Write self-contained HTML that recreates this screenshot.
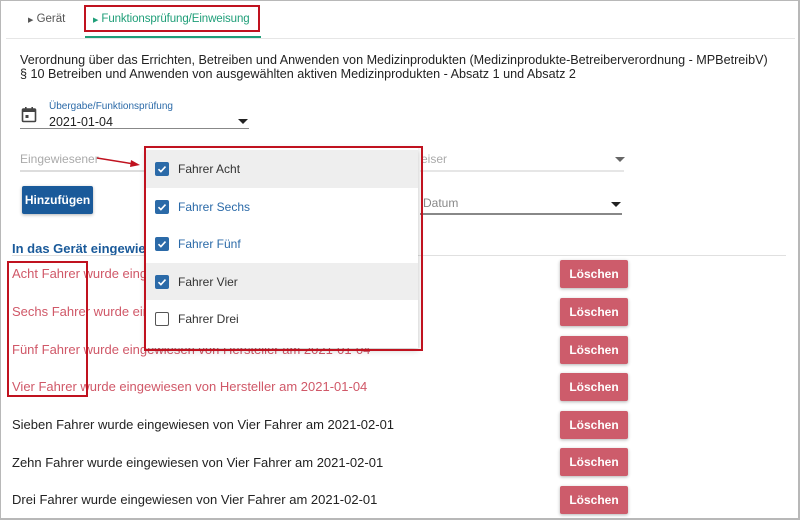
<!DOCTYPE html>
<html><head><meta charset="utf-8">
<style>
*{margin:0;padding:0;box-sizing:border-box}
body{width:800px;height:520px;overflow:hidden;background:#fff;font-family:"Liberation Sans",Arial,sans-serif;position:relative;color:#222}
.a{position:absolute;white-space:nowrap}
.frame{position:absolute;left:0;top:0;width:800px;height:520px;border:2px solid #b8b8b8;border-top-width:1px;border-left-width:1px}
.red{position:absolute;border:2px solid #c0121f}
.line{position:absolute;height:1px;background:#ddd}
.btn{position:absolute;left:560px;width:68px;height:28px;background:#cd5c6b;color:#fff;font-size:12px;font-weight:bold;text-align:center;line-height:28px;border-radius:2px;box-shadow:0 1px 3px rgba(0,0,0,.3)}
.row{position:absolute;left:12px;font-size:13px;white-space:nowrap}
.item{position:absolute;left:146px;width:272px;height:37.5px}
.cb{position:absolute;left:9px;top:12px;width:14px;height:14px;border-radius:2px;background:#2b6aa8}
.cb.off{background:#fff;border:1.5px solid #555}
.lbl{position:absolute;left:32px;top:12px;font-size:12px}
.caret{position:absolute;width:0;height:0;border-left:5px solid transparent;border-right:5px solid transparent;border-top:5px solid #222}
</style></head><body>
<div class="frame"></div>

<div class="a" style="left:28px;top:13px;font-size:11.5px;color:#555"><span style="font-size:7px">&#9654;</span> Gerät</div>
<div class="a" style="left:93px;top:13px;font-size:11.5px;letter-spacing:-0.1px;color:#1e9e78"><span style="font-size:7px">&#9654;</span> Funktionsprüfung/Einweisung</div>
<div class="line" style="left:6px;top:38px;width:789px;background:#e6e6e6"></div>
<div class="a" style="left:85px;top:36px;width:176px;height:2px;background:#1e9e78"></div>
<div class="red" style="left:84px;top:5px;width:176px;height:27px"></div>

<div class="a" style="left:20px;top:53px;font-size:12.6px;line-height:14px;color:#222">Verordnung über das Errichten, Betreiben und Anwenden von Medizinprodukten (Medizinprodukte-Betreiberverordnung - MPBetreibV)<br>§ 10 Betreiben und Anwenden von ausgewählten aktiven Medizinprodukten - Absatz 1 und Absatz 2</div>

<svg class="a" style="left:21px;top:106px" width="16" height="17" viewBox="0 0 16 17"><rect x="1.5" y="3" width="13" height="12.5" rx="1" fill="none" stroke="#444" stroke-width="1.6"/><rect x="1.5" y="3" width="13" height="3" fill="#444"/><rect x="4" y="1" width="1.6" height="3" fill="#444"/><rect x="10.4" y="1" width="1.6" height="3" fill="#444"/><rect x="4.5" y="9" width="3" height="3" fill="#444"/></svg>
<div class="a" style="left:49px;top:101px;font-size:10px;color:#2b6aa8">Übergabe/Funktionsprüfung</div>
<div class="a" style="left:49px;top:115px;font-size:12.5px;color:#222">2021-01-04</div>
<div class="caret" style="left:238px;top:119px"></div>
<div class="line" style="left:20px;top:128px;width:229px;background:#888"></div>

<div class="a" style="left:20px;top:152px;font-size:12px;color:#aaa">Eingewiesener</div>
<div class="line" style="left:20px;top:170px;width:125px;background:#ddd;height:2px"></div>
<svg class="a" style="left:96px;top:154px" width="50" height="16"><line x1="1" y1="4" x2="38" y2="10" stroke="#c0121f" stroke-width="1.5"/><polygon points="44,11 35,6 34,13" fill="#c0121f"/></svg>

<div class="a" style="left:22px;top:186px;width:71px;height:28px;background:#1a5a9a;color:#fff;font-size:12px;font-weight:bold;line-height:28px;text-align:center;border-radius:2px;box-shadow:0 1px 3px rgba(0,0,0,.3)">Hinzufügen</div>

<div class="a" style="left:421px;top:152px;font-size:12px;color:#aaa">eiser</div>
<div class="caret" style="left:615px;top:157px;border-top-color:#666"></div>
<div class="line" style="left:420px;top:170px;width:204px;height:2px;background:#e6e6e6"></div>
<div class="a" style="left:423px;top:196px;font-size:12px;color:#888">Datum</div>
<div class="caret" style="left:611px;top:202px"></div>
<div class="line" style="left:420px;top:213px;width:202px;background:#888;height:1.5px"></div>

<div class="a" style="left:12px;top:241px;font-size:13px;font-weight:bold;color:#1a5a9a">In das Gerät eingewies</div>
<div class="line" style="left:12px;top:255px;width:774px;background:#e0e0e0"></div>

<div class="row" style="top:266px;color:#d05868">Acht Fahrer wurde eingewiesen von Hersteller am 2021-01-04</div>
<div class="row" style="top:304px;color:#d05868">Sechs Fahrer wurde eingewiesen von Hersteller am 2021-01-04</div>
<div class="row" style="top:342px;color:#d05868">Fünf Fahrer wurde eingewiesen von Hersteller am 2021-01-04</div>
<div class="row" style="top:379px;color:#d05868">Vier Fahrer wurde eingewiesen von Hersteller am 2021-01-04</div>
<div class="row" style="top:417px">Sieben Fahrer wurde eingewiesen von Vier Fahrer am 2021-02-01</div>
<div class="row" style="top:455px">Zehn Fahrer wurde eingewiesen von Vier Fahrer am 2021-02-01</div>
<div class="row" style="top:492px">Drei Fahrer wurde eingewiesen von Vier Fahrer am 2021-02-01</div>
<div class="btn" style="top:260px">Löschen</div>
<div class="btn" style="top:298px">Löschen</div>
<div class="btn" style="top:336px">Löschen</div>
<div class="btn" style="top:373px">Löschen</div>
<div class="btn" style="top:411px">Löschen</div>
<div class="btn" style="top:448px">Löschen</div>
<div class="btn" style="top:486px">Löschen</div>
<div class="red" style="left:7px;top:261px;width:81px;height:136px"></div>

<div class="a" style="left:146px;top:148px;width:272px;height:200px;background:#fff;box-shadow:0 2px 6px rgba(0,0,0,.25)"></div>
<div class="item" style="top:150px;background:#eeeeee"><div class="cb"><svg width="14" height="14"><path d="M3.5 7.2l2.4 2.4 4.6-5" fill="none" stroke="#fff" stroke-width="1.6"/></svg></div><div class="lbl" style="color:#333">Fahrer Acht</div></div>
<div class="item" style="top:187.5px"><div class="cb"><svg width="14" height="14"><path d="M3.5 7.2l2.4 2.4 4.6-5" fill="none" stroke="#fff" stroke-width="1.6"/></svg></div><div class="lbl" style="color:#2b6aa8">Fahrer Sechs</div></div>
<div class="item" style="top:225px"><div class="cb"><svg width="14" height="14"><path d="M3.5 7.2l2.4 2.4 4.6-5" fill="none" stroke="#fff" stroke-width="1.6"/></svg></div><div class="lbl" style="color:#2b6aa8">Fahrer Fünf</div></div>
<div class="item" style="top:262.5px;background:#eeeeee"><div class="cb"><svg width="14" height="14"><path d="M3.5 7.2l2.4 2.4 4.6-5" fill="none" stroke="#fff" stroke-width="1.6"/></svg></div><div class="lbl" style="color:#333">Fahrer Vier</div></div>
<div class="item" style="top:300px"><div class="cb off"></div><div class="lbl" style="color:#333">Fahrer Drei</div></div>
<div class="red" style="left:144px;top:146px;width:279px;height:205px"></div>
</body></html>
